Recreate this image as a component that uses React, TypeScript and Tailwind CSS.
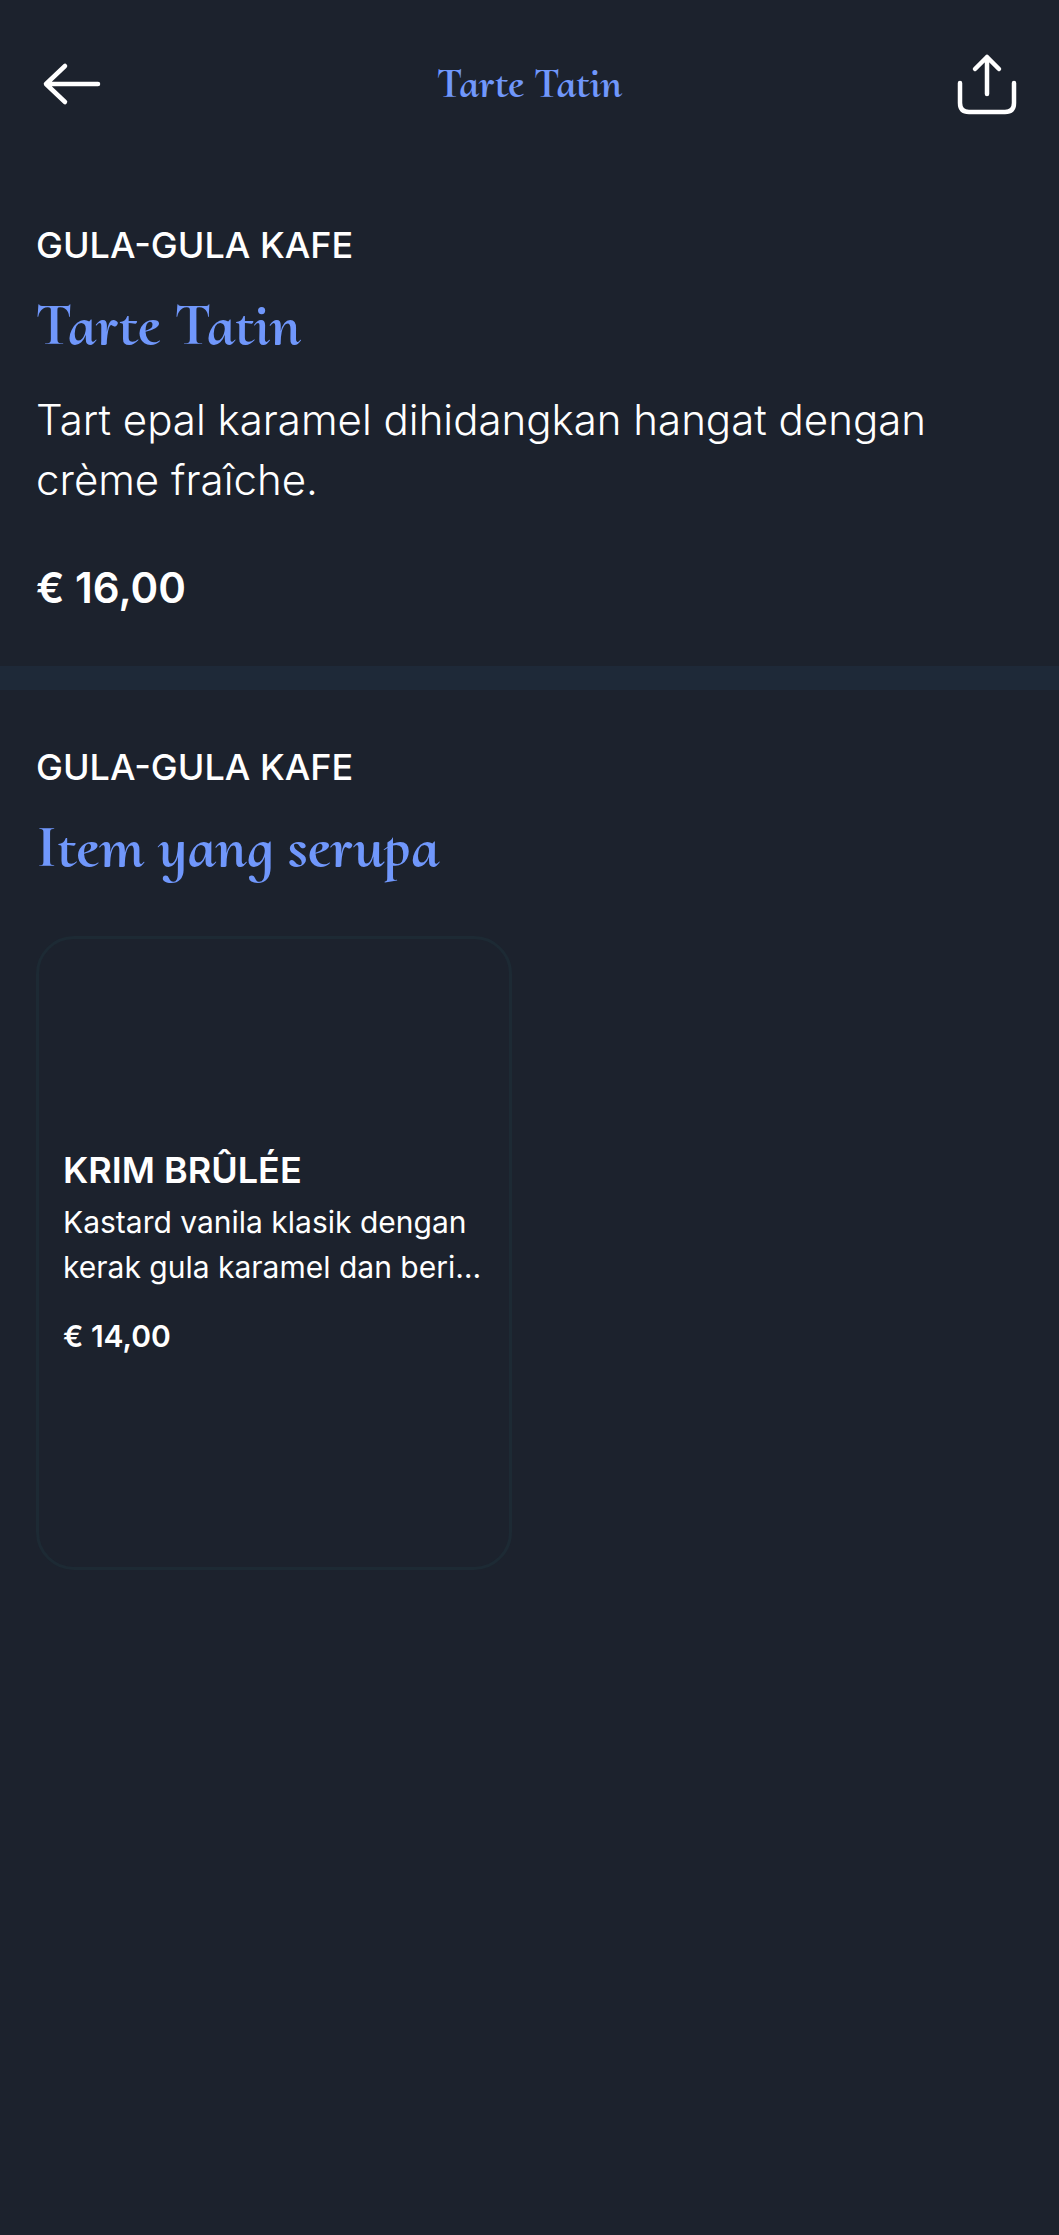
const headingFont = "font-['Cormorant_Upright','Cormorant_Infant','Liberation_Serif',serif] font-bold text-[#7097fb]";

const similarItems = [
  {
    name: 'KRIM BRÛLÉE',
    description: 'Kastard vanila klasik dengan kerak gula karamel dan beri…',
    price: '€ 14,00',
  },
];

function BackIcon() {
  return (
    <svg viewBox="0 0 72 72" className="size-[72px]" fill="none" stroke="currentColor" strokeWidth="4.5" strokeLinecap="round" strokeLinejoin="round" aria-hidden="true">
      <path d="M62 36H10M29 18L10 36l19 18" />
    </svg>
  );
}

function ShareIcon() {
  return (
    <svg viewBox="0 0 72 72" className="size-[72px]" fill="none" stroke="currentColor" strokeWidth="4.5" strokeLinecap="round" strokeLinejoin="round" aria-hidden="true">
      <path d="M9 35v20q0 9 9 9h36q9 0 9-9V35M36 46V9M24 21L36 9l12 12" />
    </svg>
  );
}

function SectionHeading({ title }: { title: string }) {
  return (
    <>
      <p className="text-4xl/[44px] font-medium">GULA-GULA KAFE</p>
      <h2 className={`mt-[22px] text-[60px]/[72px] ${headingFont}`}>{title}</h2>
    </>
  );
}

export default function App() {
  return (
    <div className="min-h-screen bg-[#1c222d] font-['Inter',sans-serif] text-white">
      <header className="grid grid-cols-[1fr_auto_1fr] items-center px-9 py-12">
        <button type="button" aria-label="Kembali" className="justify-self-start">
          <BackIcon />
        </button>
        <h1 className={`text-[42px]/[60px] ${headingFont}`}>Tarte Tatin</h1>
        <button type="button" aria-label="Kongsi" className="justify-self-end">
          <ShareIcon />
        </button>
      </header>
      <main>
        <section className="border-b-24 border-[#1e2938] px-9 pt-[55px] pb-12">
          <SectionHeading title="Tarte Tatin" />
          <p className="mt-[29px] text-[42px]/[60px] font-light">Tart epal karamel dihidangkan hangat dengan crème fraîche.</p>
          <p className="mt-12 text-[42px]/[60px] font-semibold">€ 16,00</p>
        </section>
        <section className="px-9 pt-[55px] pb-12">
          <SectionHeading title="Item yang serupa" />
          <div className="mt-[53px] grid grid-cols-2 gap-9">
            {similarItems.map((item) => (
              <a key={item.name} href="#" className="flex min-h-[634px] flex-col justify-center rounded-[38px] border-3 border-[#1d2a34] px-6">
                <h3 className="text-4xl/[44px] font-semibold">{item.name}</h3>
                <p className="mt-2 text-[30px]/[45px]">{item.description}</p>
                <p className="mt-6 text-[30px]/[45px] font-semibold">{item.price}</p>
              </a>
            ))}
          </div>
        </section>
      </main>
    </div>
  );
}
